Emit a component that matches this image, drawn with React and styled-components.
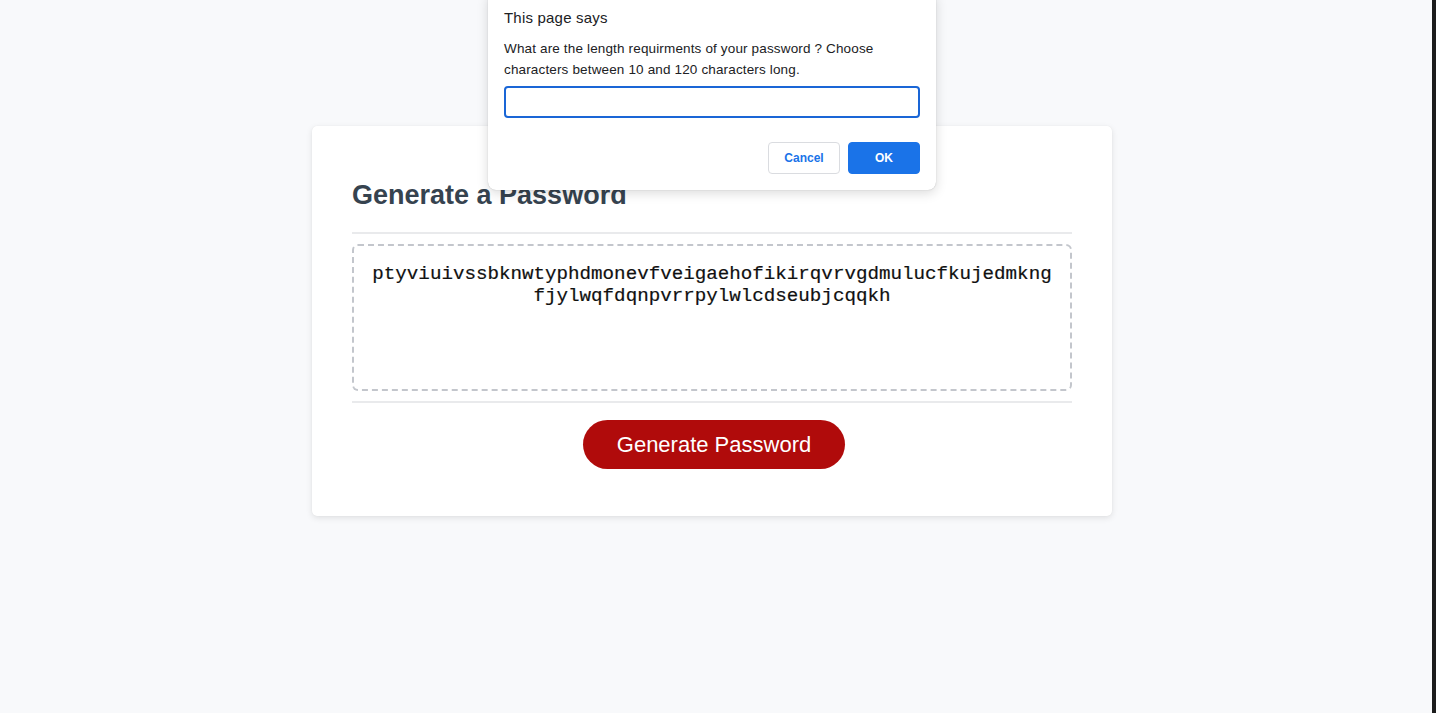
import React from "react";
import styled, { createGlobalStyle } from "styled-components";

const GlobalStyle = createGlobalStyle`
  html, body {
    margin: 0;
    padding: 0;
    height: 100%;
    overflow: hidden;
  }
  #root {
    height: 100%;
  }
`;

const password =
  "ptyviuivssbknwtyphdmonevfveigaehofikirqvrvgdmulucfkujedmkngfjylwqfdqnpvrrpylwlcdseubjcqqkh";

const Screen = styled.div`
  display: grid;
  grid-template-columns: 1fr 4px;
  height: 713px;
  font-family: "Liberation Sans", Arial, sans-serif;
`;

const Page = styled.main`
  position: relative;
  background: #f8f9fb;
  padding: 126px 8px 0 0;
  display: flex;
  justify-content: center;
  align-items: flex-start;
`;

const Edge = styled.div`
  background: #1c1c1c;
`;

const Card = styled.section`
  width: 800px;
  box-sizing: border-box;
  background: #ffffff;
  border-radius: 5px;
  box-shadow: 0 2px 6px rgba(0, 0, 0, 0.1), 0 0 1px rgba(0, 0, 0, 0.08);
  padding: 54px 40px 47px;
  display: flex;
  flex-direction: column;
  align-items: stretch;
`;

const Title = styled.h2`
  margin: 0;
  font-size: 27px;
  font-weight: 700;
  color: #36434f;
  line-height: 31px;
`;

const Rule = styled.hr`
  border: none;
  height: 2px;
  background: #e9eaec;
  margin: ${(p) => p.$margin};
`;

const Output = styled.div`
  box-sizing: border-box;
  height: 147px;
  border: 2px dashed #c3c6cc;
  border-radius: 6px;
  padding: 17px 18px;
  font-family: "Liberation Mono", "Courier New", monospace;
  font-size: 19.2px;
  line-height: 22px;
  color: #111;
  text-align: center;
  word-break: break-all;
  -webkit-text-stroke: 0.2px #111;
`;

const Actions = styled.div`
  display: flex;
  justify-content: center;
  padding-left: 4px;
`;

const GenerateButton = styled.button`
  height: 49px;
  padding: 0 34px;
  border: none;
  border-radius: 25px;
  background: #b00b0b;
  color: #ffffff;
  font-family: "Liberation Sans", Arial, sans-serif;
  font-size: 22px;
  cursor: pointer;
`;

const Dialog = styled.div`
  position: absolute;
  top: -8px;
  left: calc(50% - 4px);
  transform: translateX(-50%);
  width: 448px;
  box-sizing: border-box;
  background: #ffffff;
  border-radius: 8px;
  box-shadow: 0 3px 12px rgba(0, 0, 0, 0.15), 0 0 1px rgba(0, 0, 0, 0.3);
  padding: 17px 16px 16px;
  display: flex;
  flex-direction: column;
`;

const DialogTitle = styled.div`
  font-size: 15px;
  letter-spacing: 0.2px;
  color: #202124;
  line-height: 18px;
`;

const DialogMessage = styled.p`
  margin: 11px 0 6px;
  font-size: 13.5px;
  letter-spacing: 0.15px;
  line-height: 21px;
  color: #202124;
`;

const PromptInput = styled.input`
  box-sizing: border-box;
  width: 100%;
  height: 32px;
  border: 2px solid #1a66d6;
  border-radius: 4px;
  outline: none;
  font-size: 13px;
  padding: 0 6px;
`;

const DialogButtons = styled.div`
  display: flex;
  justify-content: flex-end;
  gap: 8px;
  margin-top: 24px;
`;

const DialogButton = styled.button`
  width: 72px;
  height: 32px;
  border-radius: 4px;
  font-family: "Liberation Sans", Arial, sans-serif;
  font-size: 12px;
  font-weight: 700;
  cursor: pointer;
  border: 1px solid ${(p) => (p.$primary ? "#1a73e8" : "#dadce0")};
  background: ${(p) => (p.$primary ? "#1a73e8" : "#ffffff")};
  color: ${(p) => (p.$primary ? "#ffffff" : "#1a73e8")};
`;

export default function App() {
  return (
    <>
      <GlobalStyle />
      <Screen>
        <Page>
          <Card>
            <Title>Generate a Password</Title>
            <Rule $margin="21px 0 10px" />
            <Output>{password}</Output>
            <Rule $margin="10px 0 17px" />
            <Actions>
              <GenerateButton>Generate Password</GenerateButton>
            </Actions>
          </Card>
          <Dialog>
            <DialogTitle>This page says</DialogTitle>
            <DialogMessage>
              What are the length requirments of your password ? Choose characters between 10 and 120 characters long.
            </DialogMessage>
            <PromptInput type="text" />
            <DialogButtons>
              <DialogButton>Cancel</DialogButton>
              <DialogButton $primary>OK</DialogButton>
            </DialogButtons>
          </Dialog>
        </Page>
        <Edge />
      </Screen>
    </>
  );
}
